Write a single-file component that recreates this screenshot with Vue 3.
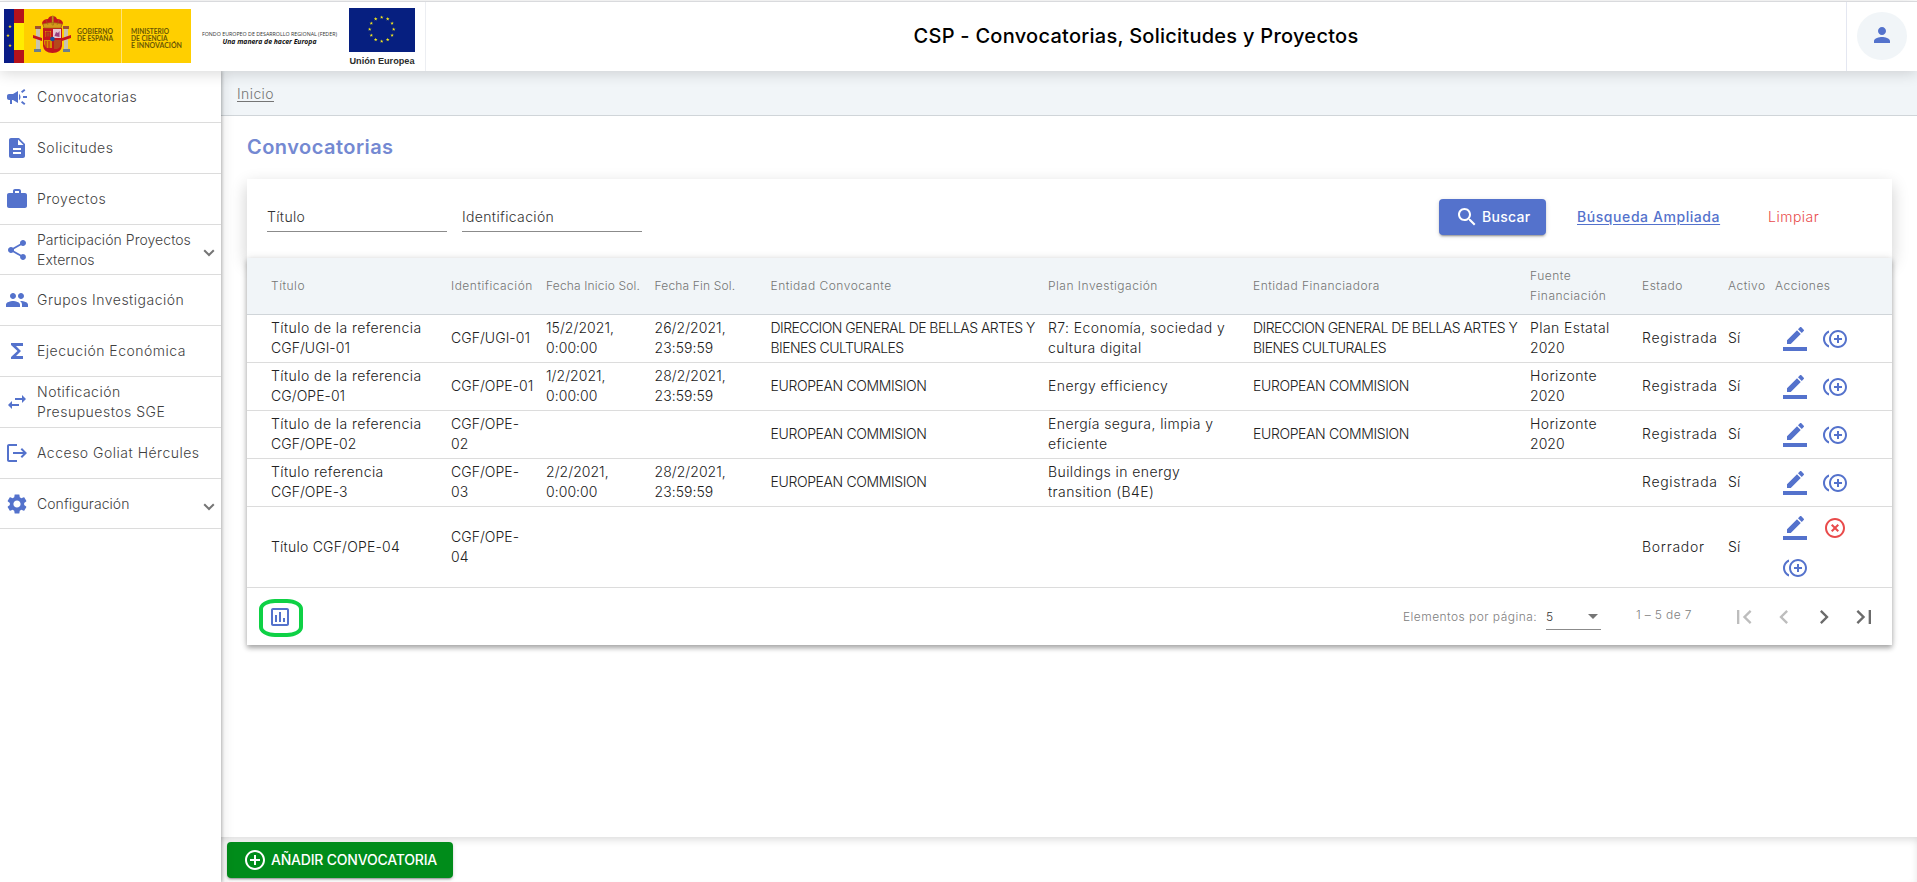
<script setup>
const icons = {
  campaign: 'M18 11v2h4v-2h-4zm-2 6.61c.96.71 2.21 1.65 3.2 2.39.4-.53.8-1.07 1.2-1.6-.99-.74-2.24-1.68-3.2-2.4-.4.54-.8 1.08-1.2 1.61zM20.4 5.6c-.4-.53-.8-1.07-1.2-1.6-.99.74-2.24 1.68-3.2 2.4.4.53.8 1.07 1.2 1.6.96-.72 2.21-1.65 3.2-2.4zM4 9c-1.1 0-2 .9-2 2v2c0 1.1.9 2 2 2h1v4h2v-4h1l5 3V6L8 9H4zm11.5 3c0-1.33-.58-2.53-1.5-3.35v6.69c.92-.81 1.5-2.01 1.5-3.34z',
  description: 'M14 2H6c-1.1 0-1.99.9-1.99 2L4 20c0 1.1.89 2 1.99 2H18c1.1 0 2-.9 2-2V8l-6-6zm2 16H8v-2h8v2zm0-4H8v-2h8v2zm-3-5V3.5L18.5 9H13z',
  work: 'M20 6h-4V4c0-1.11-.89-2-2-2h-4c-1.11 0-2 .89-2 2v2H4c-1.11 0-1.99.89-1.99 2L2 19c0 1.11.89 2 2 2h16c1.11 0 2-.89 2-2V8c0-1.11-.89-2-2-2zm-6 0h-4V4h4v2z',
  share: 'M18 16.08c-.76 0-1.44.3-1.96.77L8.91 12.7c.05-.23.09-.46.09-.7s-.04-.47-.09-.7l7.05-4.11c.54.5 1.25.81 2.04.81 1.66 0 3-1.34 3-3s-1.34-3-3-3-3 1.34-3 3c0 .24.04.47.09.7L8.04 9.81C7.5 9.31 6.79 9 6 9c-1.66 0-3 1.34-3 3s1.34 3 3 3c.79 0 1.5-.31 2.04-.81l7.12 4.16c-.05.21-.08.43-.08.65 0 1.61 1.31 2.92 2.92 2.92s2.92-1.31 2.92-2.92-1.31-2.92-2.92-2.92z',
  people: 'M16 11c1.66 0 2.99-1.34 2.99-3S17.66 5 16 5s-3 1.34-3 3 1.34 3 3 3zm-8 0c1.66 0 2.99-1.34 2.99-3S9.66 5 8 5 5 6.34 5 8s1.34 3 3 3zm0 2c-2.33 0-7 1.17-7 3.5V19h14v-2.5c0-2.33-4.67-3.5-7-3.5zm8 0c-.29 0-.62.02-.97.05 1.16.84 1.97 1.97 1.97 3.45V19h6v-2.5c0-2.33-4.67-3.5-7-3.5z',
  functions: 'M18 4H6v2l6.5 6L6 18v2h12v-3h-7l5-5-5-5h7z',
  swap: 'M6.99 11L3 15l3.99 4v-3H14v-2H6.99v-3zM21 9l-3.99-4v3H10v2h7.01v3L21 9z',
  logout: 'M17 7l-1.41 1.41L18.17 11H8v2h10.17l-2.58 2.58L17 17l5-5zM4 5h8V3H4c-1.1 0-2 .9-2 2v14c0 1.1.9 2 2 2h8v-2H4V5z',
  settings: 'M19.14 12.94c.04-.3.06-.61.06-.94 0-.32-.02-.64-.07-.94l2.03-1.58c.18-.14.23-.41.12-.61l-1.92-3.32c-.12-.22-.37-.29-.59-.22l-2.39.96c-.5-.38-1.03-.7-1.62-.94l-.36-2.54c-.04-.24-.24-.41-.48-.41h-3.84c-.24 0-.43.17-.47.41l-.36 2.54c-.59.24-1.13.57-1.62.94l-2.39-.96c-.22-.08-.47 0-.59.22L2.74 8.87c-.12.21-.08.47.12.61l2.03 1.58c-.05.3-.09.63-.09.94s.02.64.07.94l-2.03 1.58c-.18.14-.23.41-.12.61l1.92 3.32c.12.22.37.29.59.22l2.39-.96c.5.38 1.03.7 1.62.94l.36 2.54c.05.24.24.41.48.41h3.84c.24 0 .44-.17.47-.41l.36-2.54c.59-.24 1.13-.56 1.62-.94l2.39.96c.22.08.47 0 .59-.22l1.92-3.32c.12-.22.07-.47-.12-.61l-2.01-1.58zM12 15.6c-1.98 0-3.6-1.62-3.6-3.6s1.62-3.6 3.6-3.6 3.6 1.62 3.6 3.6-1.62 3.6-3.6 3.6z',
  person: 'M12 12c2.21 0 4-1.79 4-4s-1.79-4-4-4-4 1.79-4 4 1.79 4 4 4zm0 2c-2.67 0-8 1.34-8 4v2h16v-2c0-2.66-5.33-4-8-4z',
  search: 'M15.5 14h-.79l-.28-.27C15.41 12.59 16 11.11 16 9.5 16 5.91 13.09 3 9.5 3S3 5.91 3 9.5 5.91 16 9.5 16c1.61 0 3.09-.59 4.23-1.57l.27.28v.79l5 4.99L20.49 19l-4.99-5zm-6 0C7.01 14 5 11.99 5 9.5S7.01 5 9.5 5 14 7.01 14 9.5 11.99 14 9.5 14z',
  edit: 'M17.75 7L14 3.25l-10 10V17h3.75l10-10zm2.96-2.96c.39-.39.39-1.02 0-1.41L18.37.29c-.39-.39-1.02-.39-1.41 0L15 2.25 18.75 6l1.96-1.96zM0 20h24v4H0z',
  copy: 'M16 8h-2v3h-3v2h3v3h2v-3h3v-2h-3zM2 12c0-2.79 1.64-5.2 4.01-6.32V3.52C2.52 4.76 0 8.09 0 12s2.52 7.24 6.01 8.48v-2.16C3.64 17.2 2 14.79 2 12zm13-9c-4.96 0-9 4.04-9 9s4.04 9 9 9 9-4.04 9-9-4.04-9-9-9zm0 16c-3.86 0-7-3.14-7-7s3.14-7 7-7 7 3.14 7 7-3.14 7-7 7z',
  remove: 'M14.59 8L12 10.59 9.41 8 8 9.41 10.59 12 8 14.59 9.41 16 12 13.41 14.59 16 16 14.59 13.41 12 16 9.41 14.59 8zM12 2C6.47 2 2 6.47 2 12s4.47 10 10 10 10-4.47 10-10S17.53 2 12 2zm0 18c-4.41 0-8-3.59-8-8s3.59-8 8-8 8 3.59 8 8-3.59 8-8 8z',
  add: 'M13 7h-2v4H7v2h4v4h2v-4h4v-2h-4V7zm-1-5C6.48 2 2 6.48 2 12s4.48 10 10 10 10-4.48 10-10S17.52 2 12 2zm0 18c-4.41 0-8-3.59-8-8s3.59-8 8-8 8 3.59 8 8-3.59 8-8 8z',
  chart: 'M9 17H7v-7h2v7zm4 0h-2V7h2v10zm4 0h-2v-4h2v4zm2 2.1H5V5h14v14.100zM19 3H5c-1.1 0-2 .9-2 2v14c0 1.1.9 2 2 2h14c1.1 0 2-.9 2-2V5c0-1.1-.9-2-2-2z',
  first: 'M18.41 16.59L13.82 12l4.59-4.59L17 6l-6 6 6 6zM6 6h2v12H6z',
  prev: 'M15.41 7.41L14 6l-6 6 6 6 1.41-1.41L10.83 12z',
  next: 'M10 6L8.59 7.41 13.17 12l-4.58 4.59L10 18l6-6z',
  last: 'M5.59 7.41L10.18 12l-4.59 4.59L7 18l6-6-6-6zM16 6h2v12h-2z'
}

const menu = [
  { icon: 'campaign', label: 'Convocatorias' },
  { icon: 'description', label: 'Solicitudes' },
  { icon: 'work', label: 'Proyectos' },
  { icon: 'share', label: 'Participación Proyectos\nExternos', group: true },
  { icon: 'people', label: 'Grupos Investigación' },
  { icon: 'functions', label: 'Ejecución Económica' },
  { icon: 'swap', label: 'Notificación\nPresupuestos SGE' },
  { icon: 'logout', label: 'Acceso Goliat Hércules' },
  { icon: 'settings', label: 'Configuración', group: true }
]

const columns = ['Título', 'Identificación', 'Fecha Inicio Sol.', 'Fecha Fin Sol.', 'Entidad Convocante', 'Plan Investigación', 'Entidad Financiadora', 'Fuente\nFinanciación', 'Estado', 'Activo', 'Acciones']

const bellas = 'DIRECCION GENERAL DE BELLAS ARTES Y\nBIENES CULTURALES'
const ec = 'EUROPEAN COMMISION'
const rows = [
  { cells: ['Título de la referencia\nCGF/UGI-01', 'CGF/UGI-01', '15/2/2021,\n0:00:00', '26/2/2021,\n23:59:59', bellas, 'R7: Economía, sociedad y\ncultura digital', bellas, 'Plan Estatal\n2020', 'Registrada', 'Sí'], actions: ['edit', 'copy'] },
  { cells: ['Título de la referencia\nCG/OPE-01', 'CGF/OPE-01', '1/2/2021,\n0:00:00', '28/2/2021,\n23:59:59', ec, 'Energy efficiency', ec, 'Horizonte\n2020', 'Registrada', 'Sí'], actions: ['edit', 'copy'] },
  { cells: ['Título de la referencia\nCGF/OPE-02', 'CGF/OPE-\n02', '', '', ec, 'Energía segura, limpia y\neficiente', ec, 'Horizonte\n2020', 'Registrada', 'Sí'], actions: ['edit', 'copy'] },
  { cells: ['Título referencia\nCGF/OPE-3', 'CGF/OPE-\n03', '2/2/2021,\n0:00:00', '28/2/2021,\n23:59:59', ec, 'Buildings in energy\ntransition (B4E)', '', '', 'Registrada', 'Sí'], actions: ['edit', 'copy'] },
  { cells: ['Título CGF/OPE-04', 'CGF/OPE-\n04', '', '', '', '', '', '', 'Borrador', 'Sí'], actions: ['edit', 'remove', 'copy'] }
]

function kind(line) {
  if (/^(Registrada|Borrador)$/.test(line)) return 'status'
  if (/[a-z].*\//.test(line)) return 'mixed'
  if (/[a-z]/.test(line)) return 'prose'
  if (/^EURO/.test(line)) return 'caps'
  if (/^(DIREC|BIENES)/.test(line)) return 'tight'
  return 'code'
}

const starPath = 'M0-1.9L.45-.6 1.8-.6.72.23 1.12 1.53 0 .75-1.12 1.53-.72.23-1.8-.6-.45-.6z'
const ring = Array.from({ length: 12 }, (_, i) => {
  const a = (i * Math.PI) / 6
  return { x: 381.7 + 12 * Math.sin(a), y: 29.3 - 12 * Math.cos(a) }
})
</script>

<template>
  <div class="app">
    <header class="topbar">
      <svg class="logos" width="425" height="69" viewBox="0 2 425 69">
        <rect x="4" y="9" width="11" height="54" fill="#0a1c86" />
        <path d="M14 9h10v54H14z" fill="#b5121b" />
        <path d="M14 23h10v27H14z" fill="#ffec00" />
        <rect x="24" y="9" width="167" height="54" fill="#ffcf00" />
        <path d="M121.5 9v54" stroke="#ffe27a" />
        <g fill="#f6df1d">
          <path :d="starPath" transform="translate(10 26.5)" />
          <path :d="starPath" transform="translate(8 35.5)" />
          <path :d="starPath" transform="translate(10 45.5)" />
        </g>
        <g>
          <path d="M36 29h4v20h-4zM64 29h4v20h-4z" fill="#c9c3ae" />
          <path d="M35 26h6v3h-6zM63 26h6v3h-6z" fill="#a0522d" />
          <path d="M34 49h7v3h-7zM63 49h7v3h-7z" fill="#6b7f8c" />
          <path d="M33 35l9 3v3l-9-3zM71 35l-9 3v3l9-3z" fill="#c4161c" />
          <path d="M43 28h19v18q-1 7-9.500 7T43 46z" fill="#c4161c" />
          <path d="M53 29h8v9h-8z" fill="#e6c7d0" />
          <path d="M54.5 36l1.500-4 2 1 1.500-2v6z" fill="#9a4080" />
          <path d="M45 31h6v6h-6zM44 40h8v8h-5q-2-1-3-4z" fill="#d99000" />
          <path d="M46 32h4v5h-4zM46 41v7M49 41v8" fill="#b0431a" stroke="#c4161c" />
          <path d="M54 40h7v5q-1 3-4 4h-3z" fill="#b5481c" />
          <circle cx="52.5" cy="39" r="2.3" fill="#1d4f9c" />
          <path d="M42 23q1-4 6-4 1-3 4.500-3t4.500 3q5 0 6 4l-2 5H44z" fill="#c4161c" />
          <path d="M43 24q9-3 19 0l-1 4H44zM52 16h1.500v9H52zM46 20l2 5M59 20l-2 5" fill="#d49a1a" stroke="#9c6b12" stroke-width=".6" />
        </g>
        <g class="gob">
          <text x="77" y="33.5" textLength="36" lengthAdjust="spacingAndGlyphs">GOBIERNO</text>
          <text x="77" y="41" textLength="36" lengthAdjust="spacingAndGlyphs">DE ESPAÑA</text>
          <text x="131" y="33.5" textLength="38" lengthAdjust="spacingAndGlyphs">MINISTERIO</text>
          <text x="131" y="41" textLength="36.5" lengthAdjust="spacingAndGlyphs">DE CIENCIA</text>
          <text x="131" y="48" textLength="51" lengthAdjust="spacingAndGlyphs">E INNOVACIÓN</text>
        </g>
        <text class="fund" x="202" y="36" textLength="135" lengthAdjust="spacingAndGlyphs">FONDO EUROPEO DE DESARROLLO REGIONAL (FEDER)</text>
        <text class="motto" x="222.5" y="44.3" textLength="94" lengthAdjust="spacingAndGlyphs">Una manera de hacer Europa</text>
        <rect x="349" y="8" width="66" height="44" fill="#061f80" />
        <path v-for="(s, i) in ring" :key="i" :d="starPath" :transform="`translate(${s.x} ${s.y})`" fill="#f4e81e" />
        <text class="union" x="349.5" y="64" textLength="65" lengthAdjust="spacingAndGlyphs">Unión Europea</text>
      </svg>
      <h1>CSP - Convocatorias, Solicitudes y Proyectos</h1>
      <div class="user">
        <span class="avatar"><svg class="ic" viewBox="0 0 24 24"><path :d="icons.person" /></svg></span>
      </div>
    </header>

    <div class="body">
      <nav class="side">
        <a v-for="m in menu" :key="m.label" class="item" :class="{ group: m.group }">
          <svg class="ic" viewBox="0 0 24 24"><path :d="icons[m.icon]" /></svg>
          <span>{{ m.label }}</span>
          <svg v-if="m.group" class="chev" viewBox="0 0 12 8"><path d="M1.2 1.2L6 6l4.800-4.800" /></svg>
        </a>
      </nav>

      <main class="main">
        <div class="crumbs"><a>Inicio</a></div>
        <section class="content">
          <h2>Convocatorias</h2>
          <div class="panel">
            <div class="filters">
              <div class="field">Título</div>
              <div class="field">Identificación</div>
              <button class="btn search"><svg class="ic" viewBox="0 0 24 24"><path :d="icons.search" /></svg>Buscar</button>
              <a class="advanced">Búsqueda Ampliada</a>
              <a class="clear">Limpiar</a>
            </div>
            <div class="results">
              <div class="row head">
                <div v-for="c in columns" :key="c" class="cell" :class="{ date: c.startsWith('Fecha') }">{{ c }}</div>
              </div>
              <div v-for="(r, i) in rows" :key="i" class="row">
                <div v-for="(c, j) in r.cells" :key="j" class="cell">
                  <div v-for="line in c.split('\n')" :key="line" :class="kind(line)">{{ line }}</div>
                </div>
                <div class="actions">
                  <button v-for="a in r.actions" :key="a" class="act" :class="a"><svg class="ic" viewBox="0 0 24 24"><path :d="icons[a]" /></svg></button>
                </div>
              </div>
              <div class="foot">
                <span class="report"><svg class="ic" viewBox="0 0 24 24"><path :d="icons.chart" /></svg></span>
                <span class="per">Elementos por página:</span>
                <span class="select">5<i class="arrow"></i></span>
                <span class="range">1 – 5 de 7</span>
                <button v-for="p in ['first', 'prev', 'next', 'last']" :key="p" class="page" :class="p"><svg viewBox="0 0 24 24"><path :d="icons[p]" /></svg></button>
              </div>
            </div>
          </div>
        </section>
        <footer class="bottom">
          <button class="btn create"><svg class="ic" viewBox="0 0 24 24"><path :d="icons.add" /></svg>AÑADIR CONVOCATORIA</button>
        </footer>
      </main>
    </div>
  </div>
</template>

<style>
body { margin: 0; overflow: hidden; background: #fff; }
</style>

<style scoped>
* { box-sizing: border-box; }
.app { width: 100vw; height: 882px; padding-top: 1px; display: flex; flex-direction: column; font-family: Inter, "Open Sans", sans-serif; font-weight: 300; font-size: 14px; line-height: 20px; color: #212121; background: #fff; }
button { border: 0; padding: 0; background: none; font: inherit; color: inherit; }
.ic { display: block; width: 24px; height: 24px; fill: #5472cc; flex: none; }

.topbar { position: relative; z-index: 3; flex: none; display: flex; align-items: stretch; height: 70px; border-top: 1px solid #d9dadd; background: #fff; box-shadow: 0 2px 14px rgba(0, 0, 0, .16); }
.logos { flex: none; display: block; }
h1 { flex: 1; margin: 0; border-left: 1px solid #eceef2; text-align: center; font-size: 20px; font-weight: 500; line-height: 68px; letter-spacing: .26px; color: #000; }
.user { width: 71px; border-left: 1px solid #e4e7f1; display: flex; padding: 10px 0 0 10px; }
.avatar { width: 50px; height: 48px; border-radius: 50%; background: #f1f5f8; display: flex; align-items: center; justify-content: center; padding-bottom: 2px; }
.gob text { font: 700 7px Lato, sans-serif; fill: #6b5705; }
.fund { font: 400 5.600px "Open Sans", sans-serif; fill: #333; }
.motto { font: italic 700 6.800px "Open Sans", sans-serif; fill: #111; }
.union { font: 700 9.500px "Liberation Sans", sans-serif; fill: #2b2b2b; }

.body { flex: 1; display: flex; min-height: 0; }
.side { position: relative; z-index: 2; flex: none; width: 221px; padding-top: 1px; background: #fff; box-shadow: 1px 0 3px rgba(0, 0, 0, .25), 2px 0 12px rgba(0, 0, 0, .1); }
.item { display: flex; align-items: center; height: 51px; padding-left: 5px; border-bottom: 1px solid #dcdcdc; color: #3f3f3f; letter-spacing: .5px; }
.item.group { height: 50px; letter-spacing: .05px; }
.item span { margin-left: 8px; white-space: pre; }
.chev { width: 12px; height: 8px; margin: 6px 6px 0 auto; fill: none; stroke: #757575; stroke-width: 2; }

.main { flex: 1; min-width: 0; display: flex; flex-direction: column; }
.crumbs { flex: none; height: 45px; background: #f1f5f8; border-bottom: 1px solid #d0d5d9; padding: 13px 0 0 16px; color: #757575; }
.crumbs a { text-decoration: underline; text-underline-offset: 2px; letter-spacing: .4px; }
.content { flex: 1; min-height: 0; padding: 19px 25px 0 26px; }
h2 { margin: 0 0 19px; font-size: 20px; line-height: 25px; font-weight: 600; letter-spacing: .46px; color: #7489d2; }
.panel { height: 466px; }
.filters { display: flex; height: 79px; padding: 20px 0 0 20px; box-shadow: 0 6px 16px rgba(0, 0, 0, .2); }
.field { width: 180px; height: 33px; margin-right: 15px; padding-top: 8px; border-bottom: 1px solid #8b8b8b; color: #333; letter-spacing: .35px; }
.btn { display: flex; align-items: center; height: 36px; border-radius: 4px; color: #fff; font-weight: 500; box-shadow: 0 3px 1px -2px rgba(0, 0, 0, .2), 0 2px 2px rgba(0, 0, 0, .14), 0 1px 5px rgba(0, 0, 0, .12); }
.btn .ic { fill: #fff; }
.search { width: 107px; margin-left: auto; padding-left: 16px; gap: 3px; background: #5472cc; letter-spacing: .3px; }
.advanced { width: 143px; margin-left: 31px; line-height: 36px; font-weight: 500; color: #5472cc; text-decoration: underline; text-underline-offset: 2px; white-space: nowrap; letter-spacing: .57px; }
.clear { width: 124px; margin-left: 48px; line-height: 36px; color: #e94b4b; letter-spacing: .5px; }

.results { position: relative; background: #fff; box-shadow: 0 3px 5px rgba(0, 0, 0, .32), 0 0 8px rgba(0, 0, 0, .1); }
.row { display: grid; grid-template-columns: 180px 95px 108.500px 116px 277.500px 205px 277px 112px 86px 47px 1fr; align-items: center; height: 48px; padding-left: 24px; border-bottom: 1px solid #dcdcdc; }
.row:nth-child(6) { height: 81px; }
.row.head { height: 57px; background: #f1f5f8; border-color: #d0d5d9; color: #757575; font-size: 12px; letter-spacing: .5px; }
.head .date { letter-spacing: .17px; }
.cell { white-space: pre; }
.row:not(.head) .cell { padding-bottom: 1px; }
.prose { letter-spacing: .42px; }
.mixed { letter-spacing: .22px; }
.status { letter-spacing: .7px; }
.code { letter-spacing: .05px; }
.caps { letter-spacing: -.37px; }
.tight { letter-spacing: -.55px; }
.actions { display: flex; flex-wrap: wrap; width: 90px; }
.act { width: 40px; height: 40px; display: flex; align-items: center; justify-content: center; padding-top: 1px; }
.remove .ic { fill: #e94b4b; }

.foot { display: flex; height: 57px; align-items: center; padding-right: 8px; color: #808080; font-size: 12px; }
.report { width: 44px; height: 38px; margin: 2px auto 0 12px; border: 4px solid #0ed145; border-radius: 16px / 10px; display: flex; align-items: center; justify-content: center; padding-right: 3px; padding-bottom: 1px; }
.per { width: 139px; margin-right: 4px; padding-top: 1px; letter-spacing: .45px; white-space: nowrap; }
.select { display: flex; justify-content: space-between; align-items: center; width: 55px; height: 26px; padding-top: 1px; border-bottom: 1px solid #8b8b8b; color: #333; }
.arrow { border: 5px solid transparent; border-top-color: #757575; border-bottom: 0; margin-right: 3px; }
.range { width: 88px; margin: -3px 0 0 35px; letter-spacing: .35px; }
.page { width: 40px; height: 40px; display: flex; align-items: center; justify-content: center; }
.page svg { width: 28px; height: 28px; fill: #6b6b6b; }
.page.first svg, .page.prev svg { fill: #bdbdbd; }

.bottom { flex: none; height: 45px; padding: 5px 0 0 6px; box-shadow: inset 0 4px 8px -2px rgba(0, 0, 0, .16); }
.create { width: 226px; padding-left: 16px; gap: 4px; background: #008c1a; letter-spacing: -.2px; white-space: nowrap; }
</style>
